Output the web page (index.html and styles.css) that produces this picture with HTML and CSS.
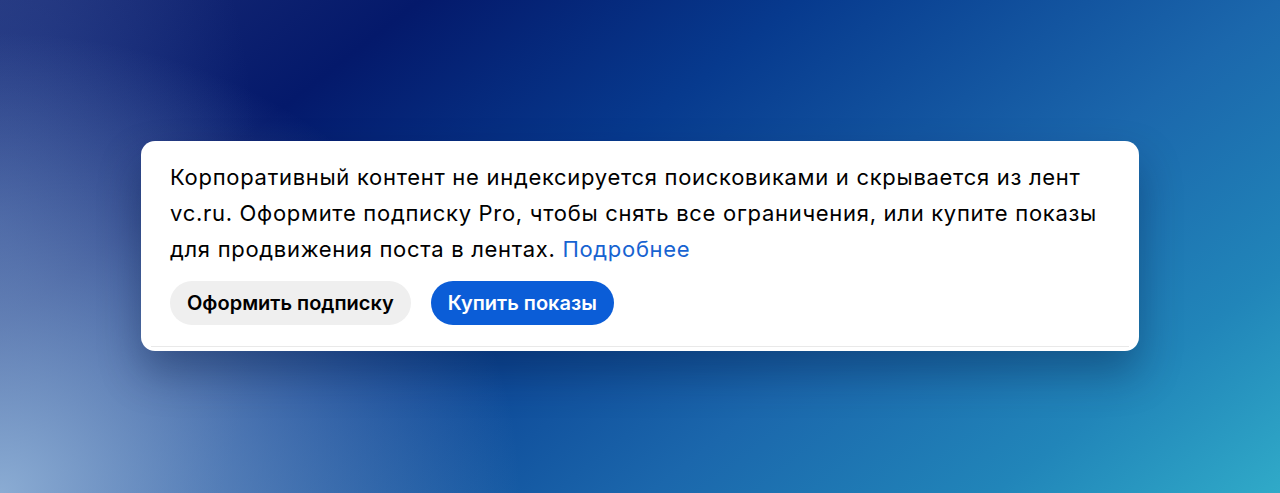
FILE: index.html
```html
<!DOCTYPE html>
<html lang="ru">

<head>
    <meta charset="UTF-8">
    <meta name="viewport" content="width=device-width, initial-scale=1.0">
    <title>Корпоративный блог</title>
    <link rel="stylesheet" href="styles.css">
</head>

<body>
    <div class="stage">
        <div class="notice">
            <p class="notice-text">
                Корпоративный контент не индексируется поисковиками и скрывается из лент
                vc.ru. Оформите подписку Pro, чтобы снять все ограничения, или купите показы
                для продвижения поста в лентах. <a href="#" class="notice-link">Подробнее</a>
            </p>
            <div class="notice-actions">
                <button class="btn btn-secondary">Оформить подписку</button>
                <button class="btn btn-primary">Купить показы</button>
            </div>
            <div class="notice-divider"></div>
        </div>
    </div>
</body>

</html>
```

FILE: styles.css
```css
:root {
    --card-bg: #ffffff;
    --text-color: #000000;
    --link-color: #1763d1;
    --primary-color: #0b5dd7;
    --secondary-bg: #efefef;
    --divider-color: #e9e9e9;
}

* {
    box-sizing: border-box;
    margin: 0;
    padding: 0;
}

html,
body {
    height: 100%;
}

body {
    font-family: Inter, Roboto, "Noto Sans", sans-serif;
    overflow: hidden;
    background-color: #0c3d8f;
    background-image:
        radial-gradient(ellipse 520px 460px at 0% 100%, rgba(145, 178, 215, 0.95), rgba(145, 178, 215, 0) 100%),
        radial-gradient(ellipse 260px 520px at 0% 45%, rgba(70, 100, 170, 0.45), rgba(70, 100, 170, 0) 100%),
        linear-gradient(142deg, #1c2d76 0%, #04196b 22%, #073a8e 42%, #1b67ac 67%, #2185b9 85%, #30aac8 100%);
}

.stage {
    height: 100%;
    padding-top: 141px;
    padding-left: 141px;
}

/* floating card */
.notice {
    width: 998px;
    background-color: var(--card-bg);
    border-radius: 14px;
    padding: 18px 24px 4px 29px;
    box-shadow: 0 22px 40px rgba(0, 20, 60, 0.35);
}

.notice-text {
    color: var(--text-color);
    font-size: 22px;
    line-height: 36px;
    letter-spacing: 0.7px;
}

.notice-link {
    color: var(--link-color);
    text-decoration: none;
}

.notice-actions {
    display: flex;
    gap: 20px;
    margin-top: 14px;
}

.btn {
    border: none;
    border-radius: 22px;
    height: 44px;
    padding: 0 17px;
    font-family: inherit;
    font-size: 20px;
    font-weight: 600;
    cursor: pointer;
}

.btn-secondary {
    background-color: var(--secondary-bg);
    color: #000;
}

.btn-primary {
    background-color: var(--primary-color);
    color: #fff;
}

.notice-divider {
    height: 1px;
    margin: 21px -14px 0 -19px;
    background-color: var(--divider-color);
}
```
